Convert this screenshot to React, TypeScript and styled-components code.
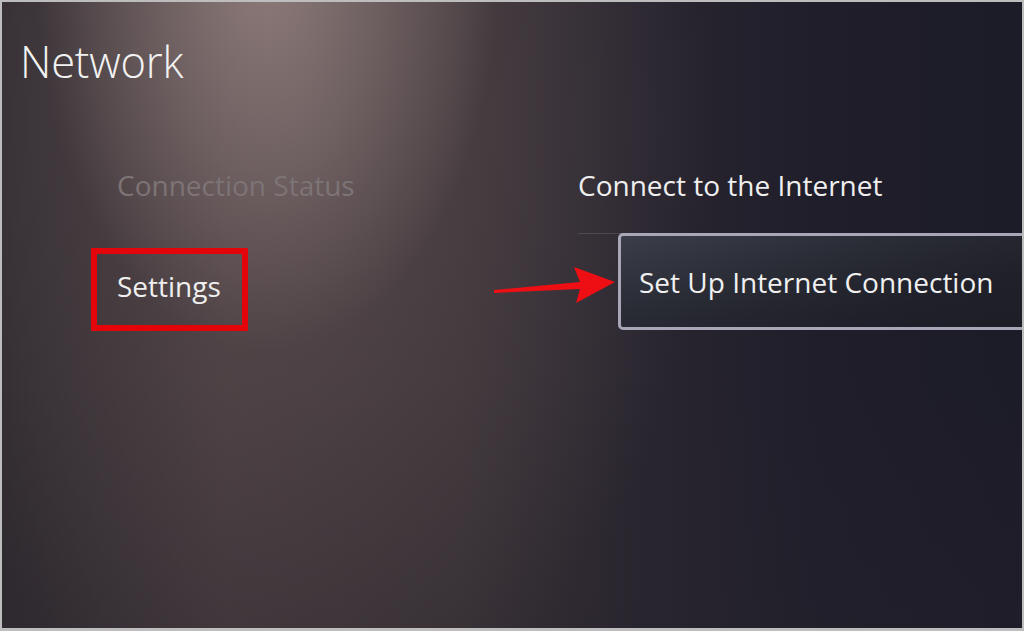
import React from "react";
import styled, { createGlobalStyle } from "styled-components";

const Global = createGlobalStyle`
  html, body { margin: 0; padding: 0; background: #bdbdbd; }
  body { font-family: "Open Sans", "Noto Sans", sans-serif; }
`;

const Frame = styled.div`
  position: relative;
  width: 1024px;
  height: 631px;
  box-sizing: border-box;
  border: 2px solid #bdbdbd;
  border-bottom-width: 3px;
  overflow: hidden;
  color: #ececec;
  background:
    radial-gradient(ellipse 230px 380px at 265px -30px, rgba(160, 140, 137, 0.75), rgba(160, 140, 137, 0) 100%),
    radial-gradient(ellipse 420px 620px at 290px 120px, rgba(100, 86, 88, 0.55), rgba(100, 86, 88, 0) 100%),
    linear-gradient(to bottom, rgba(0,0,0,0) 60%, rgba(40, 36, 44, 0.25) 100%),
    linear-gradient(to right, #302b30 0%, #44393d 22%, #3b3337 45%, #2a2630 62%, #1f1e2a 80%, #1c1b28 100%);
`;

const Title = styled.h1`
  margin: 0;
  padding: 31px 0 0 18px;
  font-size: 43.5px;
  font-weight: 300;
  line-height: 58px;
  letter-spacing: -0.2px;
  color: #f2f2f2;
`;

const Columns = styled.div`
  display: grid;
  grid-template-columns: 461px 1fr;
  padding-left: 115px;
  margin-top: 74px;
`;

const Menu = styled.div`
  display: flex;
  flex-direction: column;
  align-items: flex-start;
  gap: 64px;
`;

const MenuItem = styled.div<{ $dim?: boolean; $marked?: boolean }>`
  font-size: 28px;
  line-height: 40px;
  color: ${(p) => (p.$dim ? "#7d7476" : "#efefef")};
  ${(p) =>
    p.$marked
      ? `
    margin: -21px 0 0 -26px;
    padding: 12px 21px 19px 20px;
    border: 6px solid #e3050a;
  `
      : ""}
`;

const Panel = styled.div`
  display: flex;
  flex-direction: column;
`;

const PanelHeading = styled.div`
  font-size: 28px;
  line-height: 40px;
  color: #efefef;
  padding-bottom: 28px;
`;

const List = styled.div`
  border-top: 1px solid rgba(255, 255, 255, 0.12);
  margin-right: -40px;
`;

const Option = styled.div`
  margin-left: 40px;
  margin-top: -1px;
  height: 97px;
  box-sizing: border-box;
  display: flex;
  align-items: center;
  padding-left: 18px;
  border: 3px solid #a9a6b8;
  border-radius: 5px;
  font-size: 28px;
  color: #f0f0f0;
  background: linear-gradient(165deg, #3b3e49 0%, #2a2c36 35%, #1f2029 70%, #1c1d25 100%);
`;

const Arrow = styled.svg`
  position: absolute;
  left: 488px;
  top: 260px;
`;

export default function App() {
  return (
    <>
      <Global />
      <Frame>
        <Title>Network</Title>
        <Columns>
          <Menu>
            <MenuItem $dim>Connection Status</MenuItem>
            <MenuItem $marked>Settings</MenuItem>
          </Menu>
          <Panel>
            <PanelHeading>Connect to the Internet</PanelHeading>
            <List>
              <Option>Set Up Internet Connection</Option>
            </List>
          </Panel>
        </Columns>
        <Arrow width="130" height="46" viewBox="0 0 130 46">
          <path d="M4 28 L90 20 L84 5 L125 20 L86 41 L90 27 L4 31 Z" fill="#ee0f14" />
        </Arrow>
      </Frame>
    </>
  );
}
